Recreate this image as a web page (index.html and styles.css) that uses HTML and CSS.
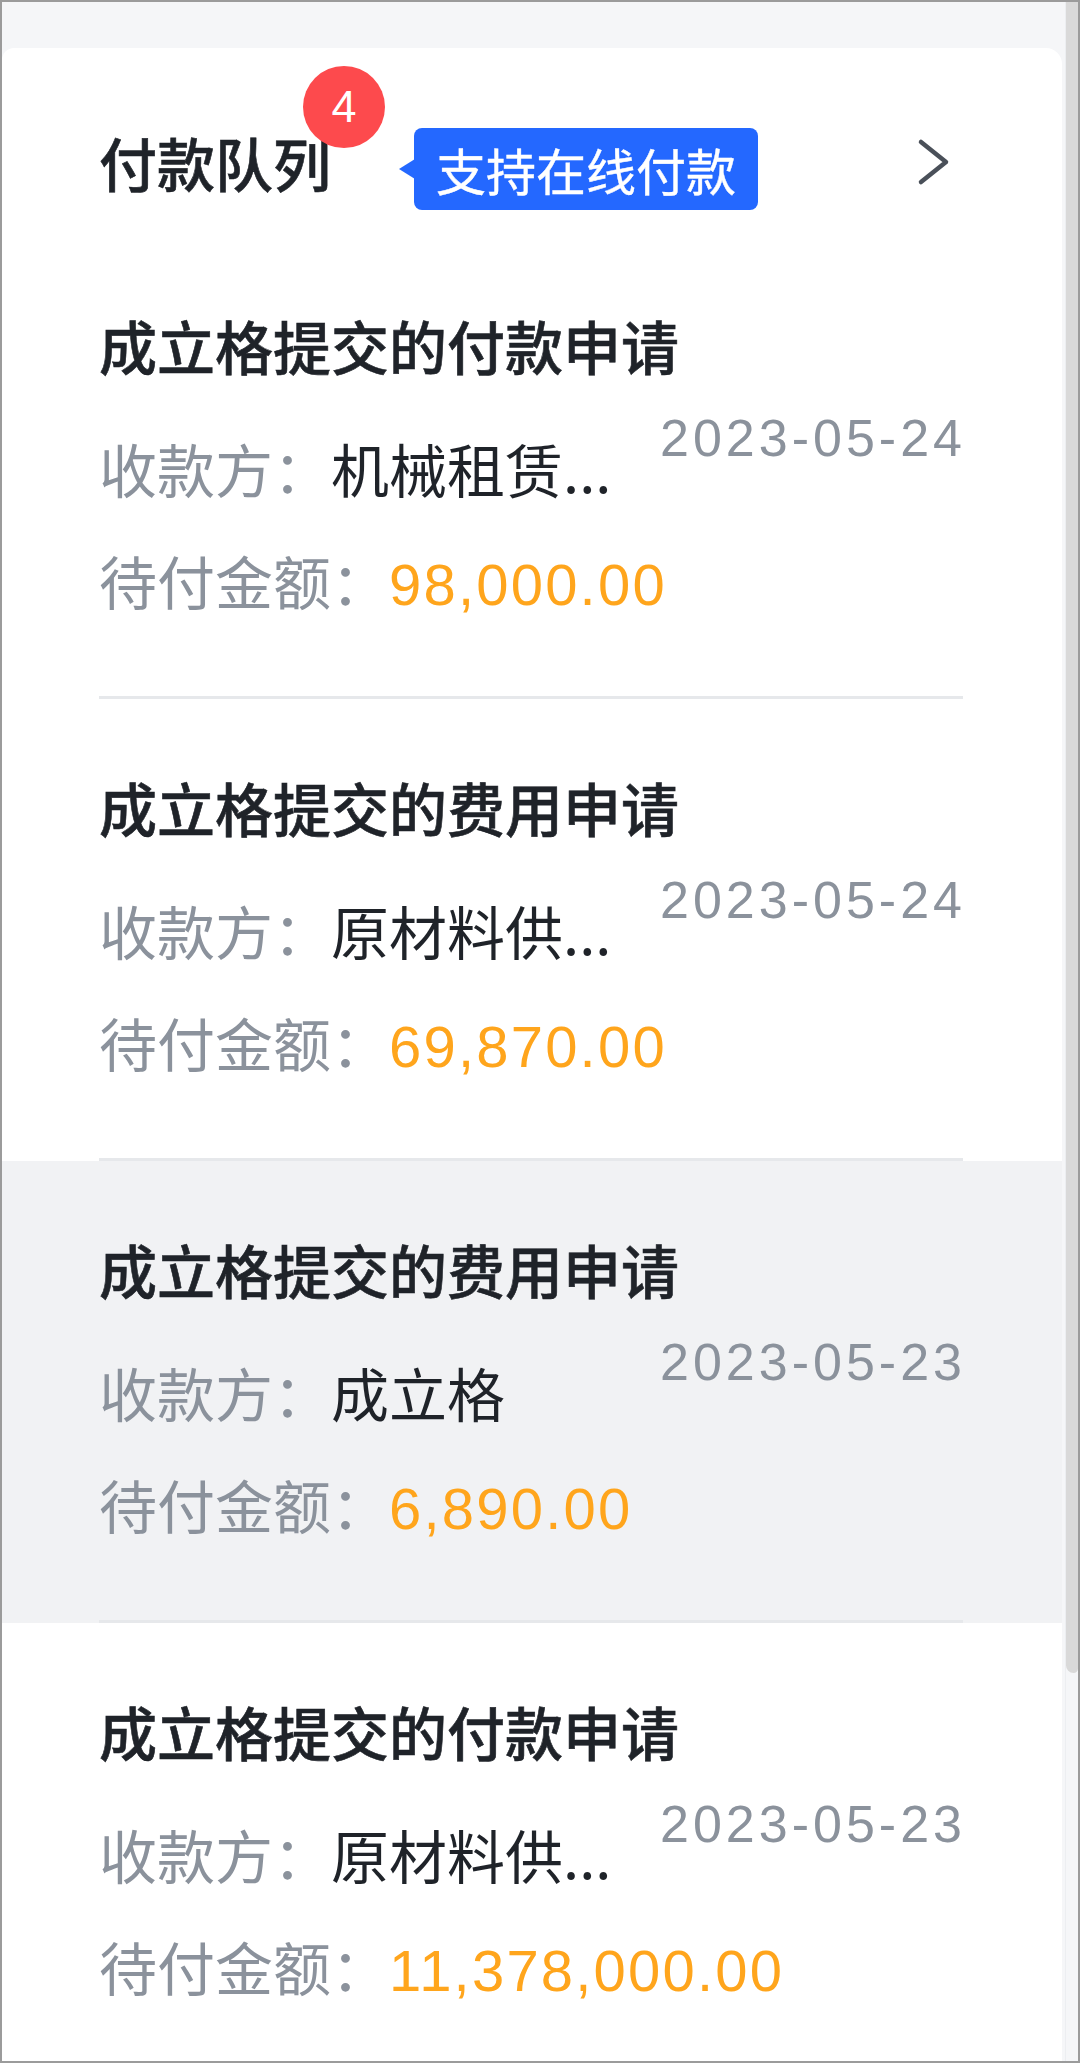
FILE: index.html
```html
<!DOCTYPE html>
<html lang="zh-CN">
<head>
<meta charset="utf-8">
<title>付款队列</title>
<link rel="stylesheet" href="styles.css">
</head>
<body>
<div class="frame">
  <main class="main">
    <section class="card">
      <header class="head">
        <div class="head-title">
          <span>付款队列</span>
          <span class="badge">4</span>
        </div>
        <span class="tag">支持在线付款</span>
        <svg class="chev" width="34" height="48" viewBox="0 0 34 48" aria-hidden="true"><path d="M5 4 L30 24 L5 44" fill="none" stroke="#4a5059" stroke-width="4.5" stroke-linecap="round" stroke-linejoin="round"/></svg>
      </header>

      <div class="item">
        <div class="item-in">
          <div class="title">成立格提交的付款申请</div>
          <div class="meta">
            <div class="rows">
              <div class="row"><span class="label">收款方：</span><span class="value">机械租赁...</span></div>
              <div class="row"><span class="label">待付金额：</span><span class="amount">98,000.00</span></div>
            </div>
            <div class="date">2023-05-24</div>
          </div>
        </div>
      </div>

      <div class="item">
        <div class="item-in">
          <div class="title">成立格提交的费用申请</div>
          <div class="meta">
            <div class="rows">
              <div class="row"><span class="label">收款方：</span><span class="value">原材料供...</span></div>
              <div class="row"><span class="label">待付金额：</span><span class="amount">69,870.00</span></div>
            </div>
            <div class="date">2023-05-24</div>
          </div>
        </div>
      </div>

      <div class="item item-active">
        <div class="item-in">
          <div class="title">成立格提交的费用申请</div>
          <div class="meta">
            <div class="rows">
              <div class="row"><span class="label">收款方：</span><span class="value">成立格</span></div>
              <div class="row"><span class="label">待付金额：</span><span class="amount">6,890.00</span></div>
            </div>
            <div class="date">2023-05-23</div>
          </div>
        </div>
      </div>

      <div class="item">
        <div class="item-in">
          <div class="title">成立格提交的付款申请</div>
          <div class="meta">
            <div class="rows">
              <div class="row"><span class="label">收款方：</span><span class="value">原材料供...</span></div>
              <div class="row"><span class="label">待付金额：</span><span class="amount">11,378,000.00</span></div>
            </div>
            <div class="date">2023-05-23</div>
          </div>
        </div>
      </div>
    </section>
  </main>
  <div class="scroll">
    <div class="thumb"></div>
  </div>
</div>
</body>
</html>
```

FILE: styles.css
```css
* { box-sizing: border-box; }

html, body {
  margin: 0;
  padding: 0;
}

body {
  font-family: "Noto Sans CJK SC", "Noto Sans", sans-serif;
  color: #1f2329;
  background: #f5f6f8;
}

.frame {
  width: 1080px;
  height: 2063px;
  border: 2px solid #9b9b9b;
  background: #f5f6f8;
  display: flex;
  overflow: hidden;
}

.main {
  flex: 1;
  padding-top: 46px;
  min-width: 0;
}

.card {
  background: #ffffff;
  border-radius: 12px 16px 0 0;
  margin-right: 3px;
}

/* header */
.head {
  display: flex;
  align-items: center;
  height: 189px;
  padding: 74px 99px 35px 97px;
}

.head-title {
  position: relative;
  font-size: 58px;
  line-height: 80px;
  font-weight: 500;
  -webkit-text-stroke: 0.6px #1f2329;
  color: #1f2329;
  white-space: nowrap;
}

.badge {
  position: absolute;
  left: 204px;
  top: -56px;
  width: 82px;
  height: 82px;
  border-radius: 50%;
  background: #fd4a4d;
  color: #ffffff;
  -webkit-text-stroke: 0;
  font-family: "Liberation Sans", Arial, sans-serif;
  font-weight: 400;
  font-size: 45px;
  line-height: 82px;
  text-align: center;
}

.tag {
  position: relative;
  margin-left: 83px;
  margin-top: 14px;
  height: 82px;
  padding: 0 22px;
  border-radius: 8px;
  background: #2468ff;
  color: #ffffff;
  font-size: 50px;
  line-height: 82px;
  font-weight: 400;
  -webkit-text-stroke: 0.4px #ffffff;
  white-space: nowrap;
}

.tag::before {
  content: "";
  position: absolute;
  left: -15px;
  top: 31px;
  width: 0;
  height: 0;
  border-top: 10px solid transparent;
  border-bottom: 10px solid transparent;
  border-right: 16px solid #2468ff;
}

.chev {
  margin-left: auto;
  margin-right: 13px;
  display: block;
}

/* items */
.item {
  padding: 0 99px 0 97px;
}

.item-active {
  background: #f1f2f4;
}

.item-in {
  padding: 68px 0 55px;
  border-bottom: 3px solid #e6e8eb;
}

.title {
  font-size: 58px;
  line-height: 80px;
  font-weight: 500;
  -webkit-text-stroke: 0.6px #1f2329;
  color: #1f2329;
  white-space: nowrap;
  margin-bottom: 27px;
}

.meta {
  display: flex;
  align-items: flex-start;
}

.rows {
  flex: 1;
  min-width: 0;
  display: flex;
  flex-direction: column;
}

.row {
  font-size: 58px;
  line-height: 112px;
  white-space: nowrap;
}

.label {
  color: #8b929c;
}

.value {
  color: #1f2329;
}

.amount {
  font-family: "Liberation Sans", Arial, sans-serif;
  color: #ffa51c;
  letter-spacing: 2.2px;
}

.date {
  flex: none;
  font-family: "Liberation Sans", Arial, sans-serif;
  font-size: 52px;
  line-height: 52px;
  color: #8b929c;
  letter-spacing: 4px;
  margin-right: -3px;
  white-space: nowrap;
}

/* scrollbar */
.scroll {
  width: 13px;
  flex: none;
  background: #f5f6f8;
  border-left: 1px solid #eceef1;
}

.thumb {
  height: 1671px;
  background: #d9d9d9;
  border-radius: 0 0 6px 10px;
}
```
